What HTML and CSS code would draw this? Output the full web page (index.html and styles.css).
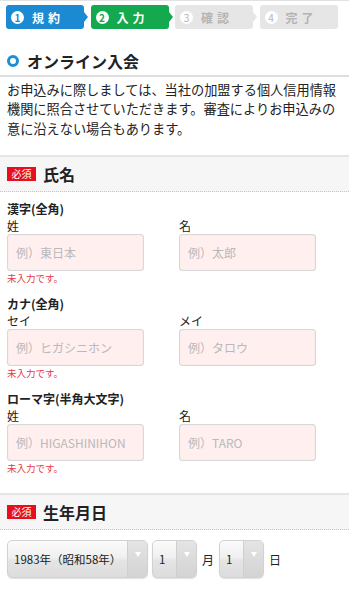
FILE: index.html
```html
<!DOCTYPE html>
<html lang="ja">
<head>
    <meta charset="UTF-8">
    <meta name="viewport" content="width=device-width, initial-scale=1.0">
    <title>オンライン入会</title>
    <link rel="stylesheet" href="styles.css">
</head>
<body>
    <ol class="steps">
        <li class="step step-blue"><span class="step-body"><span class="step-num">1</span>規約</span></li>
        <li class="step step-green"><span class="step-body"><span class="step-num">2</span>入力</span></li>
        <li class="step step-off"><span class="step-body"><span class="step-num">3</span>確認</span></li>
        <li class="step step-off step-last"><span class="step-body"><span class="step-num">4</span>完了</span></li>
    </ol>

    <h1 class="page-title"><span class="title-icon"></span>オンライン入会</h1>
    <p class="intro">お申込みに際しましては、当社の加盟する個人信用情報機関に照合させていただきます。審査によりお申込みの意に沿えない場合もあります。</p>

    <section class="section">
        <div class="section-head"><span class="badge">必須</span><h2>氏名</h2></div>
        <div class="fields">
            <div class="field-group">
                <p class="group-label">漢字(全角)</p>
                <div class="field-row">
                    <label class="field"><span class="field-label">姓</span><input type="text" placeholder="例）東日本"></label>
                    <label class="field"><span class="field-label">名</span><input type="text" placeholder="例）太郎"></label>
                </div>
                <p class="error">未入力です。</p>
            </div>
            <div class="field-group">
                <p class="group-label">カナ(全角)</p>
                <div class="field-row">
                    <label class="field"><span class="field-label">セイ</span><input type="text" placeholder="例）ヒガシニホン"></label>
                    <label class="field"><span class="field-label">メイ</span><input type="text" placeholder="例）タロウ"></label>
                </div>
                <p class="error">未入力です。</p>
            </div>
            <div class="field-group">
                <p class="group-label">ローマ字(半角大文字)</p>
                <div class="field-row">
                    <label class="field"><span class="field-label">姓</span><input type="text" placeholder="例）HIGASHINIHON"></label>
                    <label class="field"><span class="field-label">名</span><input type="text" placeholder="例）TARO"></label>
                </div>
                <p class="error">未入力です。</p>
            </div>
        </div>
    </section>

    <section class="section">
        <div class="section-head"><span class="badge">必須</span><h2>生年月日</h2></div>
        <div class="date-row">
            <div class="select select-year"><span class="select-value">1983年（昭和58年）</span><span class="select-arrow"></span></div>
            <div class="select select-small"><span class="select-value">1</span><span class="select-arrow"></span></div>
            <span class="unit">月</span>
            <div class="select select-small"><span class="select-value">1</span><span class="select-arrow"></span></div>
            <span class="unit">日</span>
        </div>
    </section>
</body>
</html>
```

FILE: styles.css
```css
body {
    margin: 0;
    font-family: "Noto Sans CJK JP", "Noto Sans", sans-serif;
    color: #222;
    background-color: #fff;
    border-top: 1px solid #e2e2e2;
}

/* steps */
.steps {
    display: flex;
    gap: 2.5px;
    list-style: none;
    margin: 0;
    padding: 4px 6px 0;
}
.step {
    display: flex;
    align-items: center;
}
.step::after {
    content: '';
    width: 0;
    height: 0;
    border-top: 5px solid transparent;
    border-bottom: 5px solid transparent;
    border-left: 4px solid currentColor;
}
.step-last::after {
    border-left-color: transparent;
}
.step-body {
    display: flex;
    align-items: center;
    width: 78px;
    height: 24px;
    box-sizing: border-box;
    padding-left: 5px;
    border-radius: 3px;
    font-size: 12px;
    font-weight: bold;
    letter-spacing: 4px;
}
.step-num {
    display: flex;
    align-items: center;
    justify-content: center;
    width: 13px;
    height: 13px;
    margin-right: 8px;
    border-radius: 50%;
    background-color: #fff;
    font-size: 10px;
    letter-spacing: 0;
}
.step-blue { color: #1b8ad3; }
.step-blue .step-body { background-color: #1b8ad3; color: #fff; }
.step-blue .step-num { color: #1b8ad3; }
.step-green { color: #14a84f; }
.step-green .step-body { background-color: #14a84f; color: #fff; }
.step-green .step-num { color: #14a84f; }
.step-off { color: #e6e6e6; }
.step-off .step-body { background-color: #e6e6e6; color: #b4b4b4; }
.step-off .step-num { color: #b4b4b4; font-weight: normal; }

/* title */
.page-title {
    display: flex;
    align-items: center;
    gap: 8px;
    margin: 0;
    padding: 21px 7px 3px;
    border-bottom: 2px solid #dedede;
    font-size: 16px;
    line-height: 22px;
}
.title-icon {
    width: 12px;
    height: 12px;
    box-sizing: border-box;
    border: 3px solid #1e8fd6;
    border-radius: 50%;
}
.intro {
    margin: 2.5px 0 17px;
    padding: 0 7px;
    font-size: 13.2px;
    line-height: 19.5px;
}

/* sections */
.section-head {
    display: flex;
    align-items: center;
    gap: 7px;
    height: 34px;
    padding: 0 7px;
    border-top: 2px solid #e5e5e5;
    border-bottom: 1px dotted #c6c6c6;
    background-color: #f6f6f6;
}
.section-head h2 {
    margin: 0;
    font-size: 16px;
    line-height: 22px;
}
.badge {
    padding: 0 4.5px;
    background-color: #e60f1e;
    color: #fff;
    font-size: 10px;
    line-height: 14px;
}
.fields {
    padding: 7.5px 7px 19.5px;
}
.field-group {
    margin-bottom: 11px;
}
.field-group:last-child {
    margin-bottom: 0;
}
.group-label {
    margin: 0;
    font-size: 12px;
    font-weight: bold;
    line-height: 17px;
}
.field-row {
    display: grid;
    grid-template-columns: 172px 1fr;
}
.field-label {
    display: block;
    font-size: 12px;
    line-height: 17px;
}
.field input {
    display: block;
    width: 137px;
    height: 37px;
    box-sizing: border-box;
    margin: 0;
    padding: 0 8px;
    border: 1px solid #d8d8d8;
    border-radius: 3px;
    background-color: #ffefef;
    box-shadow: inset 0 0 1px rgba(0, 0, 0, 0.15);
    font-family: inherit;
    font-size: 12px;
}
.field input::placeholder {
    color: #b9b9b9;
}
.error {
    margin: 1px 0 0;
    color: #e8383d;
    font-size: 9.5px;
    line-height: 12px;
}

/* date */
.date-row {
    display: flex;
    align-items: center;
    gap: 5px;
    padding: 10px 7px;
}
.select {
    display: flex;
    height: 38px;
    box-sizing: border-box;
    border: 1px solid #d2d2d2;
    border-radius: 5px;
    background: linear-gradient(#fbfbfb, #f0f0f0 45%, #e4e4e4 55%, #dcdcdc);
    box-shadow: 0 1px 1px rgba(0, 0, 0, 0.12);
    overflow: hidden;
    font-size: 11.5px;
}
.select-year { width: 141px; margin-right: -1px; }
.select-small { width: 45px; }
.select-value {
    flex: 1;
    display: flex;
    align-items: center;
    padding-left: 6px;
}
.select-arrow {
    display: flex;
    justify-content: center;
    width: 19px;
    padding-top: 11px;
    border-left: 1px solid #cfcfcf;
    background: linear-gradient(#e4e4e4, #d3d3d3);
}
.select-arrow::before {
    content: '';
    width: 0;
    height: 0;
    border-left: 3px solid transparent;
    border-right: 3px solid transparent;
    border-top: 5px solid #fff;
}
.unit {
    font-size: 12px;
}
```
